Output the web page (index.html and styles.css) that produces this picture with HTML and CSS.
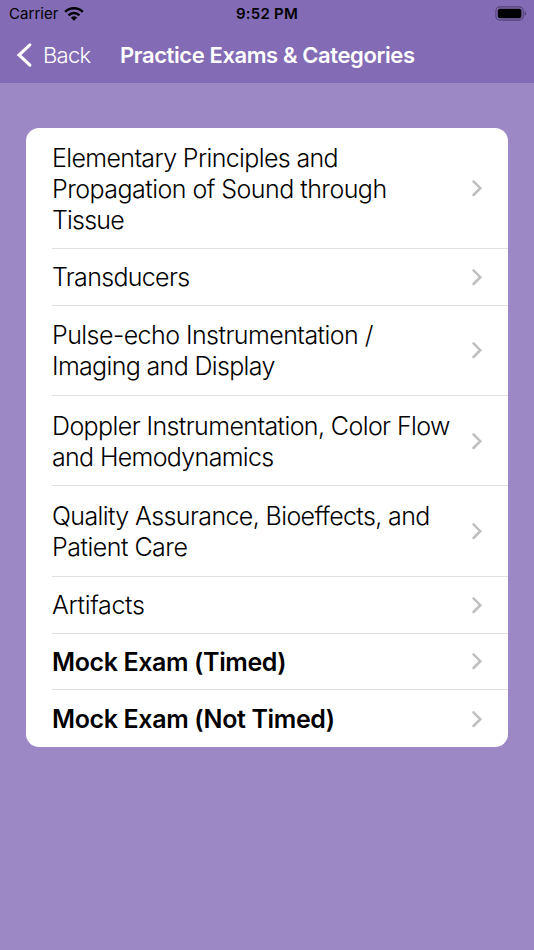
FILE: index.html
```html
<!DOCTYPE html>
<html lang="en">
<head>
<meta charset="utf-8">
<title>Practice Exams &amp; Categories</title>
<link rel="stylesheet" href="styles.css">
</head>
<body>
<header class="top">
  <div class="status">
    <div class="carrier"><span class="carrier-name">Carrier</span>
      <svg class="wifi" width="20" height="14" viewBox="0 0 20 14"><path d="M10 13.800 6.900 10.700a4.600 4.600 0 0 1 6.200 0z"/><path d="M4.500 8.300a8 8 0 0 1 11 0M1.200 4.900a12.700 12.700 0 0 1 17.600 0" fill="none" stroke="#000" stroke-width="2.500"/></svg>
    </div>
    <time class="clock">9:52 PM</time>
    <svg class="battery" width="32" height="15" viewBox="0 0 32 15"><rect x=".9" y=".9" width="27.400" height="13.200" rx="4" fill="none" stroke="#544377" stroke-width="1.100"/><rect x="2.800" y="2.800" width="23.600" height="9.400" rx="2"/><path d="M29.700 5.200v4.600c2-.6 2-4 0-4.600z" fill="#544377"/></svg>
  </div>
  <nav class="nav">
    <a class="back"><svg width="18" height="26" viewBox="0 0 18 26"><path d="M14.900 2.800 4 13l10.900 10.200" fill="none" stroke="#fff" stroke-width="3.100" stroke-linecap="round" stroke-linejoin="miter"/></svg><span class="back-label">Back</span></a>
    <h1 class="title">Practice Exams &amp; Categories</h1>
  </nav>
</header>
<main class="list">
  <a class="row r1"><span class="text"><span class="l a">Elementary Principles and</span><span class="l b">Propagation of Sound through</span><span class="l c">Tissue</span></span><svg class="chev" viewBox="0 0 12 18"><path d="m2.500 2.400 6.800 6.800L2.500 16"/></svg></a>
  <a class="row r2"><span class="text"><span class="l d">Transducers</span></span><svg class="chev" viewBox="0 0 12 18"><path d="m2.500 2.400 6.800 6.800L2.500 16"/></svg></a>
  <a class="row r3"><span class="text"><span class="l e">Pulse-echo Instrumentation /</span><span class="l f">Imaging and Display</span></span><svg class="chev" viewBox="0 0 12 18"><path d="m2.500 2.400 6.800 6.800L2.500 16"/></svg></a>
  <a class="row r3"><span class="text"><span class="l g">Doppler Instrumentation, Color Flow</span><span class="l h">and Hemodynamics</span></span><svg class="chev" viewBox="0 0 12 18"><path d="m2.500 2.400 6.800 6.800L2.500 16"/></svg></a>
  <a class="row r3"><span class="text"><span class="l i">Quality Assurance, Bioeffects, and</span><span class="l j">Patient Care</span></span><svg class="chev" viewBox="0 0 12 18"><path d="m2.500 2.400 6.800 6.800L2.500 16"/></svg></a>
  <a class="row r2"><span class="text"><span class="l k">Artifacts</span></span><svg class="chev" viewBox="0 0 12 18"><path d="m2.500 2.400 6.800 6.800L2.500 16"/></svg></a>
  <a class="row r2 bold"><span class="text"><span class="l m">Mock Exam (Timed)</span></span><svg class="chev" viewBox="0 0 12 18"><path d="m2.500 2.400 6.800 6.800L2.500 16"/></svg></a>
  <a class="row r2 bold"><span class="text"><span class="l n">Mock Exam (Not Timed)</span></span><svg class="chev" viewBox="0 0 12 18"><path d="m2.500 2.400 6.800 6.800L2.500 16"/></svg></a>
</main>
</body>
</html>
```
FILE: styles.css
```css
* { box-sizing: border-box; }
body { margin: 0; min-height: 950px; background: #9b88c4; font-family: Inter, "Liberation Sans", sans-serif; color: #000; }
.top { height: 83px; background: #836bb5; }
.status { height: 27px; display: grid; grid-template-columns: 1fr auto 1fr; align-items: center; padding: 0 7px 0 9px; font-size: 15px; }
.carrier { display: flex; align-items: center; gap: 5px; }
.carrier-name { letter-spacing: 0.05px; }
.clock { font-weight: 600; letter-spacing: 0.25px; margin-right: 2px; }
.battery { justify-self: end; }
.nav { height: 55px; display: flex; align-items: center; padding-left: 15px; color: #fff; }
.back { display: flex; align-items: center; gap: 10px; width: 105px; font-size: 22px; font-weight: 350; letter-spacing: -0.7px; }
.title { margin: 0; font-size: 22px; font-weight: 600; white-space: nowrap; letter-spacing: -0.4px; }
.list { margin: 45px 26px 0; background: #fff; border-radius: 13px; padding-left: 26px; overflow: hidden; }
.row { display: flex; align-items: center; justify-content: space-between; padding-right: 25px; border-bottom: 1px solid #e0e0e2; }
.row:last-child { border-bottom: 0; }
.text { padding-top: 2px; }
.r1 { height: 121px; }
.r2 { height: 56.750px; }
.r3 { height: 90.350px; }
.l { display: block; width: max-content; font-size: 25px; line-height: 31px; font-weight: 300; letter-spacing: -0.5px; white-space: nowrap; }
.bold .l { font-weight: 600; }
.a { letter-spacing: -0.64px; }
.b { letter-spacing: -0.53px; }
.c { letter-spacing: -0.82px; }
.d { letter-spacing: -0.68px; }
.e { letter-spacing: -0.55px; }
.f { letter-spacing: -0.66px; }
.g { letter-spacing: -0.6px; }
.h { letter-spacing: -0.66px; }
.i { letter-spacing: -0.62px; }
.k { letter-spacing: -0.34px; }
.m { letter-spacing: -0.38px; }
.n { letter-spacing: -0.36px; }
.chev { width: 12px; height: 18px; flex: none; fill: none; stroke: #bfbfc1; stroke-width: 2.500; stroke-linecap: round; }
```
